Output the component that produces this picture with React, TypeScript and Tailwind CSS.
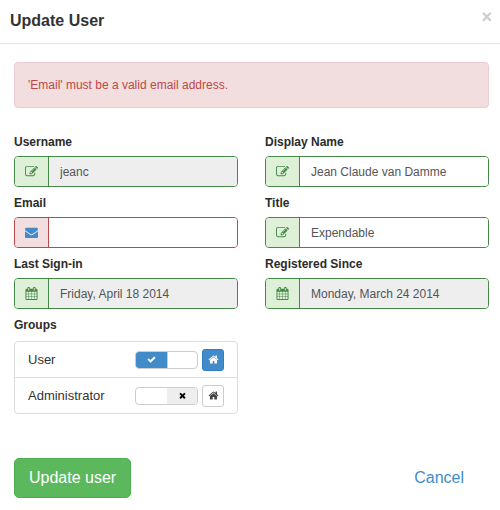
import { useId, useState, type ReactNode } from 'react';

const ICONS = {
  edit: 'M888 1184l116-116-152-152-116 116v56h96v96h56zm440-720q-16-16-33 1l-350 350q-17 17-1 33t33-1l350-350q17-17 1-33zm80 594v190q0 119-84.5 203.5t-203.5 84.5h-832q-119 0-203.5-84.5t-84.5-203.5v-832q0-119 84.5-203.5t203.5-84.5h832q63 0 117 25 15 7 18 23 3 17-9 29l-49 49q-14 14-32 8-23-6-45-6h-832q-66 0-113 47t-47 113v832q0 66 47 113t113 47h832q66 0 113-47t47-113v-126q0-13 9-22l64-64q15-15 35-7t20 29zm-96-738l288 288-672 672h-288v-288zm444 132l-92 92-288-288 92-92q28-28 68-28t68 28l152 152q28 28 28 68t-28 68z',
  calendar:
    'M192 1664h288v-288h-288v288zm352 0h320v-288h-320v288zm-352-352h288v-320h-288v320zm352 0h320v-320h-320v320zm-352-384h288v-288h-288v288zm736 736h320v-288h-320v288zm-384-736h320v-288h-320v288zm768 736h288v-288h-288v288zm-384-352h320v-320h-320v320zm-352-864v-288q0-13-9.5-22.5t-22.5-9.5h-64q-13 0-22.5 9.5t-9.5 22.5v288q0 13 9.5 22.5t22.5 9.5h64q13 0 22.5-9.5t9.5-22.5zm736 864h288v-320h-288v320zm-384-384h320v-288h-320v288zm384 0h288v-288h-288v288zm32-480v-288q0-13-9.5-22.5t-22.5-9.5h-64q-13 0-22.5 9.5t-9.5 22.5v288q0 13 9.5 22.5t22.5 9.5h64q13 0 22.5-9.5t9.5-22.5zm384-64v1280q0 52-38 90t-90 38h-1408q-52 0-90-38t-38-90v-1280q0-52 38-90t90-38h128v-96q0-66 47-113t113-47h64q66 0 113 47t47 113v96h384v-96q0-66 47-113t113-47h64q66 0 113 47t47 113v96h128q52 0 90 38t38 90z',
  envelope:
    'M1792 710v794q0 66-47 113t-113 47h-1472q-66 0-113-47t-47-113v-794q44 49 101 87 362 246 497 345 57 42 92.5 65.5t94.5 48 110 24.5h2q51 0 110-24.5t94.5-48 92.5-65.5q170-123 498-345 57-39 100-87zm0-294q0 79-49 151t-122 123q-376 261-468 325-10 7-42.5 31t-54 38.5-52 32.5-57.5 27-50 9h-2q-23 0-50-9t-57.5-27-52-32.5-54-38.5-42.5-31q-91-64-262-182.5t-205-142.5q-62-42-117-115.5t-55-136.5q0-78 41.5-130t118.5-52h1472q65 0 112.5 47t47.5 113z',
  home: 'M1472 992v480q0 26-19 45t-45 19h-384v-384h-256v384h-384q-26 0-45-19t-19-45v-480q0-1 .5-3t.5-3l575-474 575 474q1 2 1 6zm223-69l-62 74q-8 9-21 11h-3q-13 0-21-7l-692-577-692 577q-12 8-24 7-13-2-21-11l-62-74q-8-10-7-23.5t11-21.5l719-599q32-26 76-26t76 26l244 204v-195q0-14 9-23t23-9h192q14 0 23 9t9 23v408l219 182q10 8 11 21.5t-7 23.5z',
  check:
    'M1671 566q0 40-28 68l-724 724-136 136q-28 28-68 28t-68-28l-136-136-362-362q-28-28-28-68t28-68l136-136q28-28 68-28t68 28l294 295 656-657q28-28 68-28t68 28l136 136q28 28 28 68z',
  times:
    'M1490 1322q0 40-28 68l-136 136q-28 28-68 28t-68-28l-294-294-294 294q-28 28-68 28t-68-28l-136-136q-28-28-28-68t28-68l294-294-294-294q-28-28-28-68t28-68l136-136q28-28 68-28t68 28l294 294 294-294q28-28 68-28t68 28l136 136q28 28 28 68t-28 68l-294 294 294 294q28 28 28 68z',
};

function Icon({ name, className }: { name: keyof typeof ICONS; className: string }) {
  return (
    <svg viewBox="0 0 1792 1792" fill="currentColor" aria-hidden="true" className={className}>
      <path d={ICONS[name]} />
    </svg>
  );
}

type FieldProps = {
  label: string;
  value: string;
  icon: ReactNode;
  type?: string;
  disabled?: boolean;
  invalid?: boolean;
};

function Field({ label, value, icon, type = 'text', disabled, invalid }: FieldProps) {
  const id = useId();
  return (
    <div className="flex min-w-0 flex-col gap-1.5">
      <label htmlFor={id} className="text-xs leading-4 font-bold text-[#2b2b2b]">
        {label}
      </label>
      <div
        className={`flex h-[31px] overflow-hidden rounded border ${
          invalid ? 'border-[#b94a48]' : 'border-[#468847]'
        }`}
      >
        <span
          className={`flex w-[34px] shrink-0 items-center justify-center border-r ${
            invalid
              ? 'border-[#b94a48] bg-[#f2dede] text-[#b94a48]'
              : 'border-[#468847] bg-[#dff0d8] text-[#468847]'
          }`}
        >
          {icon}
        </span>
        <input
          id={id}
          type={type}
          defaultValue={value}
          readOnly={disabled}
          aria-invalid={invalid}
          className={`min-w-0 flex-1 px-[11px] text-xs text-[#555] outline-none ${
            disabled ? 'bg-[#eee]' : 'bg-white'
          }`}
        />
      </div>
    </div>
  );
}

function GroupRow({ name, member, home }: { name: string; member: boolean; home: boolean }) {
  const [on, setOn] = useState(member);
  return (
    <li className="flex h-9 items-center gap-1 border-b border-[#ddd] px-[13px] last:h-[35px] last:border-b-0">
      <label className="flex flex-1 cursor-pointer items-center justify-between text-[13px] leading-4 text-[#333]">
        {name}
        <input
          type="checkbox"
          checked={on}
          onChange={(e) => setOn(e.target.checked)}
          className="peer sr-only"
        />
        <span className="flex h-[18px] w-[63px] overflow-hidden rounded border border-[#ccc] bg-white peer-focus-visible:outline">
          <span className={`flex w-[31px] items-center justify-center ${on ? 'bg-[#428bca] text-white' : ''}`}>
            {on && <Icon name="check" className="size-[9px]" />}
          </span>
          <span className={`flex flex-1 items-center justify-center border-l ${on ? 'border-[#ccc]' : 'border-[#eee] bg-[#eee] text-black'}`}>
            {!on && <Icon name="times" className="size-[9px]" />}
          </span>
        </span>
      </label>
      <button
        type="button"
        aria-label={`Make ${name} the home group`}
        className={`flex size-[22px] items-center justify-center rounded-[3px] border ${
          home ? 'border-[#357ebd] bg-[#428bca] text-white' : 'border-[#ccc] bg-white text-[#444]'
        }`}
      >
        <Icon name="home" className="size-[11px]" />
      </button>
    </li>
  );
}

export default function App() {
  const edit = <Icon name="edit" className="size-[13px]" />;
  const calendar = <Icon name="calendar" className="size-[13px]" />;
  return (
    <main className="bg-white font-['Liberation_Sans',Arial,sans-serif]">
      <header className="flex h-11 items-start justify-between border-b border-[#e5e5e5] pr-2 pl-2.5">
        <h1 className="pt-[11px] text-base leading-5 font-bold text-[#333]">Update User</h1>
        <button type="button" aria-label="Close" className="pt-[7px] text-lg leading-5 font-bold text-[#ccc]">
          ×
        </button>
      </header>
      <form className="pt-[18px] pr-[11px] pb-3 pl-3.5" onSubmit={(e) => e.preventDefault()} noValidate>
        <p
          role="alert"
          className="mb-[26px] flex h-[46px] items-center rounded border border-[#ebccd1] bg-[#f2dede] px-[13px] text-xs text-[#b94a48]"
        >
          'Email' must be a valid email address.
        </p>
        <div className="grid grid-cols-2 gap-x-[27px] gap-y-2">
          <Field label="Username" value="jeanc" icon={edit} disabled />
          <Field label="Display Name" value="Jean Claude van Damme" icon={edit} />
          <Field
            label="Email"
            value=""
            type="email"
            invalid
            icon={
              <a href="mailto:" aria-label="Send email" className="text-[#428bca]">
                <Icon name="envelope" className="size-[13px]" />
              </a>
            }
          />
          <Field label="Title" value="Expendable" icon={edit} />
          <Field label="Last Sign-in" value="Friday, April 18 2014" icon={calendar} disabled />
          <Field label="Registered Since" value="Monday, March 24 2014" icon={calendar} disabled />
          <section className="flex flex-col gap-2">
            <h2 className="text-xs leading-4 font-bold text-[#2b2b2b]">Groups</h2>
            <ul className="rounded border border-[#ddd]">
              <GroupRow name="User" member home />
              <GroupRow name="Administrator" member={false} home={false} />
            </ul>
          </section>
        </div>
        <div className="mt-11 flex items-center justify-between pr-[25px]">
          <button
            type="submit"
            className="h-10 rounded-[5px] border border-[#4cae4c] bg-[#5cb85c] px-3.5 text-base text-white"
          >
            Update user
          </button>
          <a href="#cancel" className="text-base text-[#428bca]">
            Cancel
          </a>
        </div>
      </form>
    </main>
  );
}
